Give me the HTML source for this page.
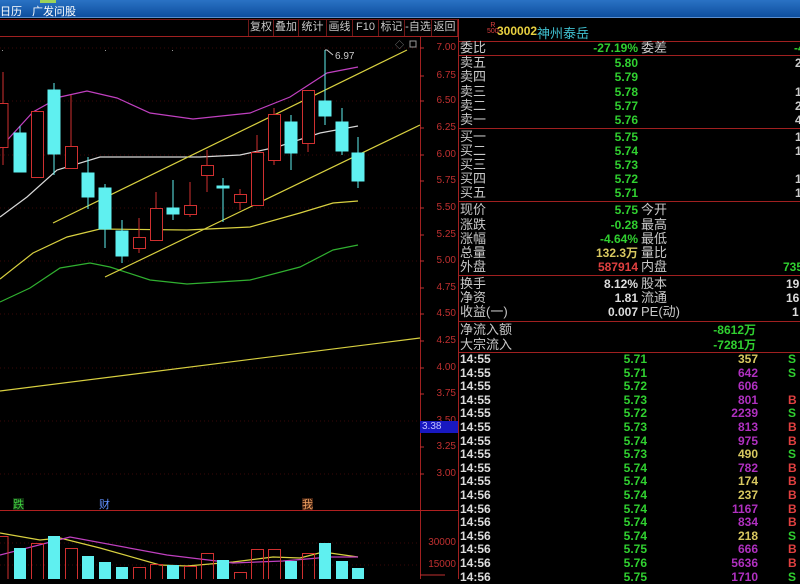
<!DOCTYPE html>
<html><head><meta charset="utf-8"><style>
*{margin:0;padding:0;box-sizing:border-box}
body{width:800px;height:579px;background:#000;position:relative;overflow:hidden;font-family:"Liberation Sans","Noto Sans CJK SC",sans-serif}
.top{position:absolute;left:0;top:0;width:800px;height:18px;background:linear-gradient(#2a72c4,#0e4f9e);border-bottom:1px solid #5a8fd0}
.top span{position:absolute;top:3px;color:#fff;font-size:11px}
.tb{position:absolute;top:19px;height:17px;font-size:11px;color:#c8c8c8;line-height:17px;text-align:center;border-left:1px solid #701818}
.t{position:absolute;font-size:13px;color:#c8c8c8;white-space:nowrap;line-height:14px}
.v{position:absolute;font-size:12px;font-weight:bold;white-space:nowrap;line-height:14px;text-align:right}
.hl{position:absolute;left:458px;width:342px;height:1px;background:#a02020}
.ax{position:absolute;left:420px;width:36px;text-align:right;font-size:10px;color:#c03030;line-height:10px}
</style></head><body>
<div class="top"><span style="left:0">日历</span><span style="left:32px">广发问股</span><div style="position:absolute;left:40px;top:0;width:16px;height:3px;background:#9cd35a"></div></div>
<div style="position:absolute;left:0;top:19px;width:458px;height:17px;background:#000"></div>
<div class="tb" style="left:248px;width:25px">复权</div>
<div class="tb" style="left:273px;width:25px">叠加</div>
<div class="tb" style="left:298px;width:28px">统计</div>
<div class="tb" style="left:326px;width:26px">画线</div>
<div class="tb" style="left:352px;width:26px">F10</div>
<div class="tb" style="left:378px;width:26px">标记</div>
<div class="tb" style="left:404px;width:27px">-自选</div>
<div class="tb" style="left:431px;width:27px;border-right:1px solid #701818">返回</div>
<div style="position:absolute;left:0;top:36px;width:458px;height:1px;background:#a02020"></div>
<div style="position:absolute;left:0;top:19px;width:458px;height:1px;background:#701818"></div>

<svg style="position:absolute;left:0;top:0" width="458" height="579">
<g stroke="#3a0808" stroke-width="1" stroke-dasharray="1,3">
<line x1="0" y1="48" x2="420" y2="48"/><line x1="0" y1="101" x2="420" y2="101"/><line x1="0" y1="155" x2="420" y2="155"/><line x1="0" y1="208" x2="420" y2="208"/><line x1="0" y1="261" x2="420" y2="261"/><line x1="0" y1="314" x2="420" y2="314"/><line x1="0" y1="368" x2="420" y2="368"/><line x1="0" y1="421" x2="420" y2="421"/><line x1="0" y1="474" x2="420" y2="474"/><line x1="0" y1="543" x2="420" y2="543"/><line x1="0" y1="565" x2="420" y2="565"/>
</g>
<line x1="420.5" y1="37" x2="420.5" y2="579" stroke="#a02020"/>
<line x1="0" y1="510.5" x2="458" y2="510.5" stroke="#b02020"/>
<g stroke="#c03030"><line x1="420" y1="48" x2="424" y2="48"/><line x1="420" y1="76" x2="424" y2="76"/><line x1="420" y1="101" x2="424" y2="101"/><line x1="420" y1="128" x2="424" y2="128"/><line x1="420" y1="155" x2="424" y2="155"/><line x1="420" y1="181" x2="424" y2="181"/><line x1="420" y1="208" x2="424" y2="208"/><line x1="420" y1="235" x2="424" y2="235"/><line x1="420" y1="261" x2="424" y2="261"/><line x1="420" y1="288" x2="424" y2="288"/><line x1="420" y1="314" x2="424" y2="314"/><line x1="420" y1="341" x2="424" y2="341"/><line x1="420" y1="368" x2="424" y2="368"/><line x1="420" y1="394" x2="424" y2="394"/><line x1="420" y1="447" x2="424" y2="447"/><line x1="420" y1="474" x2="424" y2="474"/></g>
<g fill="none" stroke-width="1.2">
<polyline stroke="#c040c0" points="0,148 33,112 60,97 87,91 117,98 150,113 193,119 250,113 290,97 327,73 358,67"/>
<polyline stroke="#d8d8d8" points="0,217 27,197 57,170 100,157 150,157 200,157 240,155 277,147 320,133 358,126"/>
<polyline stroke="#d8d040" points="0,279 33,253 67,237 100,229 187,230 250,227 300,213 333,203 358,201"/>
<polyline stroke="#30b030" points="0,302 30,288 60,268 90,263 110,267 150,280 187,284 250,280 300,267 333,250 358,245"/>
<line stroke="#d8d040" x1="53" y1="223" x2="407" y2="50"/>
<line stroke="#d8d040" x1="105" y1="277" x2="420" y2="125"/>
<line stroke="#d8d040" x1="0" y1="391" x2="420" y2="338"/>
<polyline stroke="#d8d040" points="0,533 40,540 60,538 100,548 160,565 187,566 233,562 273,557 300,558 323,552 358,557"/>
<polyline stroke="#c040c0" points="0,555 70,537 167,555 233,563 283,561 330,557 358,557"/>
</g>
<g stroke="#d03030" fill="none">
<line x1="3" y1="72" x2="3" y2="165"/><rect x="-2" y="103.5" width="10" height="44" fill="#000"/>
<line x1="37" y1="111" x2="37" y2="177"/><rect x="31.5" y="111.5" width="12" height="66" fill="#000"/>
<line x1="71" y1="95" x2="71" y2="168"/><rect x="65.5" y="146.5" width="12" height="22" fill="#000"/>
<line x1="139" y1="218" x2="139" y2="253"/><rect x="133.5" y="237.5" width="12" height="11" fill="#000"/>
<line x1="156" y1="192" x2="156" y2="240"/><rect x="150.5" y="208.5" width="12" height="32" fill="#000"/>
<line x1="190" y1="182" x2="190" y2="217"/><rect x="184.5" y="205.5" width="12" height="9" fill="#000"/>
<line x1="207" y1="150" x2="207" y2="192"/><rect x="201.5" y="165.5" width="12" height="10" fill="#000"/>
<line x1="240" y1="189" x2="240" y2="210"/><rect x="234.5" y="194.5" width="12" height="8" fill="#000"/>
<line x1="257" y1="135" x2="257" y2="206"/><rect x="251.5" y="152.5" width="12" height="53" fill="#000"/>
<line x1="274" y1="108" x2="274" y2="165"/><rect x="268.5" y="114.5" width="12" height="46" fill="#000"/>
<line x1="308" y1="90" x2="308" y2="152"/><rect x="302.5" y="90.5" width="12" height="53" fill="#000"/>
</g>
<g stroke="#5ff0f0" fill="#5ff0f0">
<line x1="20" y1="126" x2="20" y2="172"/><rect x="14" y="133" width="12" height="39"/>
<line x1="54" y1="83" x2="54" y2="175"/><rect x="48" y="90" width="12" height="64"/>
<line x1="88" y1="157" x2="88" y2="209"/><rect x="82" y="173" width="12" height="24"/>
<line x1="105" y1="184" x2="105" y2="248"/><rect x="99" y="188" width="12" height="41"/>
<line x1="122" y1="220" x2="122" y2="263"/><rect x="116" y="231" width="12" height="25"/>
<line x1="173" y1="180" x2="173" y2="220"/><rect x="167" y="208" width="12" height="6"/>
<line x1="223" y1="178" x2="223" y2="222"/><rect x="217" y="186" width="12" height="2"/>
<line x1="291" y1="115" x2="291" y2="170"/><rect x="285" y="122" width="12" height="31"/>
<line x1="325" y1="50" x2="325" y2="125"/><rect x="319" y="101" width="12" height="15"/>
<line x1="342" y1="108" x2="342" y2="155"/><rect x="336" y="122" width="12" height="29"/>
<line x1="358" y1="137" x2="358" y2="188"/><rect x="352" y="153" width="12" height="28"/>
</g>
<polyline points="325,50 327,50 333,55" fill="none" stroke="#ccc"/>
<text x="335" y="59" font-size="10" fill="#ccc" font-family="Liberation Sans">6.97</text>
<text x="395" y="48" font-size="9" fill="#888">◇</text>
<rect x="410" y="41" width="6" height="6" fill="none" stroke="#999"/>
<g fill="#999"><rect x="2" y="50" width="1" height="1"/><rect x="105" y="50" width="1" height="1"/><rect x="172" y="50" width="1" height="1"/></g>
<g stroke="#d03030" fill="none">
<rect x="-2" y="536.5" width="10" height="50"/><rect x="31.5" y="543.5" width="12" height="40"/><rect x="65.5" y="548.5" width="12" height="40"/><rect x="133.5" y="567.5" width="12" height="20"/><rect x="150.5" y="564.5" width="12" height="20"/><rect x="184.5" y="566.5" width="12" height="20"/><rect x="201.5" y="553.5" width="12" height="30"/><rect x="234.5" y="572.5" width="12" height="20"/><rect x="251.5" y="549.5" width="12" height="40"/><rect x="268.5" y="549.5" width="12" height="40"/><rect x="302.5" y="553.5" width="12" height="40"/>
</g>
<g fill="#5ff0f0">
<rect x="14" y="548" width="12" height="31"/><rect x="48" y="536" width="12" height="43"/><rect x="82" y="556" width="12" height="23"/><rect x="99" y="562" width="12" height="17"/><rect x="116" y="567" width="12" height="12"/><rect x="167" y="565" width="12" height="14"/><rect x="217" y="560" width="12" height="19"/><rect x="285" y="561" width="12" height="18"/><rect x="319" y="543" width="12" height="36"/><rect x="336" y="561" width="12" height="18"/><rect x="352" y="568" width="12" height="11"/>
</g>
<g font-size="11" font-family="Noto Sans CJK SC,sans-serif">
<rect x="13" y="498" width="11" height="12" fill="#103010"/><text x="13" y="508" fill="#40d040">跌</text>
<text x="99" y="508" fill="#6090ff">财</text>
<rect x="302" y="498" width="11" height="12" fill="#402010"/><text x="302" y="508" fill="#f0a060">我</text>
</g>
<line x1="420" y1="575" x2="445" y2="575" stroke="#c03030"/>
</svg>
<div class="ax" style="top:43px">7.00</div><div class="ax" style="top:71px">6.75</div><div class="ax" style="top:96px">6.50</div><div class="ax" style="top:123px">6.25</div><div class="ax" style="top:150px">6.00</div><div class="ax" style="top:176px">5.75</div><div class="ax" style="top:203px">5.50</div><div class="ax" style="top:230px">5.25</div><div class="ax" style="top:256px">5.00</div><div class="ax" style="top:283px">4.75</div><div class="ax" style="top:309px">4.50</div><div class="ax" style="top:336px">4.25</div><div class="ax" style="top:363px">4.00</div><div class="ax" style="top:389px">3.75</div><div class="ax" style="top:416px">3.50</div><div class="ax" style="top:442px">3.25</div><div class="ax" style="top:469px">3.00</div>
<div class="ax" style="top:538px">30000</div><div class="ax" style="top:560px">15000</div>
<div style="position:absolute;left:420px;top:421px;width:38px;height:12px;background:#1818c0;color:#c0c0ff;font-size:10px;line-height:12px;padding-left:2px">3.38</div>

<div style="position:absolute;left:458px;top:19px;width:1px;height:560px;background:#a02020"></div>
<div class="hl" style="top:41px"></div><div class="hl" style="top:55px"></div><div class="hl" style="top:128px"></div><div class="hl" style="top:201px"></div><div class="hl" style="top:275px"></div><div class="hl" style="top:321px"></div><div class="hl" style="top:352px"></div>
<div style="position:absolute;left:487px;top:23px;font-size:7px;line-height:6px;color:#e04040;text-align:center">R<br>500</div>
<div style="position:absolute;left:497px;top:24px;font-size:12px;font-weight:bold;color:#e8d040">300002</div>
<div style="position:absolute;left:537px;top:23px;font-size:13px;color:#40c0d0">神州泰岳</div>

<div class="t" style="left:460px;top:41px">委比</div><div class="v" style="right:162px;top:41px;color:#30d030">-27.19%</div><div class="t" style="left:641px;top:41px">委差</div><div class="v" style="left:794px;top:41px;color:#30d030">-4</div>
<div class="t" style="left:460px;top:56px">卖五</div><div class="v" style="right:162px;top:56px;color:#30d030">5.80</div><div class="v" style="left:795px;top:56px;color:#ccc">2</div>
<div class="t" style="left:460px;top:70px">卖四</div><div class="v" style="right:162px;top:70px;color:#30d030">5.79</div>
<div class="t" style="left:460px;top:85px">卖三</div><div class="v" style="right:162px;top:85px;color:#30d030">5.78</div><div class="v" style="left:795px;top:85px;color:#ccc">1</div>
<div class="t" style="left:460px;top:99px">卖二</div><div class="v" style="right:162px;top:99px;color:#30d030">5.77</div><div class="v" style="left:795px;top:99px;color:#ccc">2</div>
<div class="t" style="left:460px;top:113px">卖一</div><div class="v" style="right:162px;top:113px;color:#30d030">5.76</div><div class="v" style="left:795px;top:113px;color:#ccc">4</div>
<div class="t" style="left:460px;top:130px">买一</div><div class="v" style="right:162px;top:130px;color:#30d030">5.75</div><div class="v" style="left:795px;top:130px;color:#ccc">1</div>
<div class="t" style="left:460px;top:144px">买二</div><div class="v" style="right:162px;top:144px;color:#30d030">5.74</div><div class="v" style="left:795px;top:144px;color:#ccc">1</div>
<div class="t" style="left:460px;top:158px">买三</div><div class="v" style="right:162px;top:158px;color:#30d030">5.73</div>
<div class="t" style="left:460px;top:172px">买四</div><div class="v" style="right:162px;top:172px;color:#30d030">5.72</div><div class="v" style="left:795px;top:172px;color:#ccc">1</div>
<div class="t" style="left:460px;top:186px">买五</div><div class="v" style="right:162px;top:186px;color:#30d030">5.71</div><div class="v" style="left:795px;top:186px;color:#ccc">1</div>
<div class="t" style="left:460px;top:203px">现价</div><div class="v" style="right:162px;top:203px;color:#30d030">5.75</div><div class="t" style="left:641px;top:203px">今开</div>
<div class="t" style="left:460px;top:218px">涨跌</div><div class="v" style="right:162px;top:218px;color:#30d030">-0.28</div><div class="t" style="left:641px;top:218px">最高</div>
<div class="t" style="left:460px;top:232px">涨幅</div><div class="v" style="right:162px;top:232px;color:#30d030">-4.64%</div><div class="t" style="left:641px;top:232px">最低</div>
<div class="t" style="left:460px;top:246px">总量</div><div class="v" style="right:162px;top:246px;color:#d8c860">132.3万</div><div class="t" style="left:641px;top:246px">量比</div>
<div class="t" style="left:460px;top:260px">外盘</div><div class="v" style="right:162px;top:260px;color:#e04040">587914</div><div class="t" style="left:641px;top:260px">内盘</div><div class="v" style="left:783px;top:260px;color:#30d030">735</div>
<div class="t" style="left:460px;top:277px">换手</div><div class="v" style="right:162px;top:277px;color:#ddd">8.12%</div><div class="t" style="left:641px;top:277px">股本</div><div class="v" style="left:786px;top:277px;color:#ddd">19</div>
<div class="t" style="left:460px;top:291px">净资</div><div class="v" style="right:162px;top:291px;color:#ddd">1.81</div><div class="t" style="left:641px;top:291px">流通</div><div class="v" style="left:786px;top:291px;color:#ddd">16</div>
<div class="t" style="left:460px;top:305px">收益(一)</div><div class="v" style="right:162px;top:305px;color:#ddd">0.007</div><div class="t" style="left:641px;top:305px">PE(动)</div><div class="v" style="left:792px;top:305px;color:#ddd">1</div>
<div class="t" style="left:460px;top:323px">净流入额</div><div class="v" style="right:44px;top:323px;color:#30d030">-8612万</div>
<div class="t" style="left:460px;top:338px">大宗流入</div><div class="v" style="right:44px;top:338px;color:#30d030">-7281万</div>

<div style="position:absolute;left:458px;top:353px;width:342px;font-size:12px;font-weight:bold;line-height:13.6px">
<div style="position:relative;height:13.6px"><span style="position:absolute;left:2px;color:#ddd">14:55</span><span style="position:absolute;right:153px;color:#30d030">5.71</span><span style="position:absolute;right:42px;color:#d8c860">357</span><span style="position:absolute;left:330px;color:#30d030">S</span></div>
<div style="position:relative;height:13.6px"><span style="position:absolute;left:2px;color:#ddd">14:55</span><span style="position:absolute;right:153px;color:#30d030">5.71</span><span style="position:absolute;right:42px;color:#b030c0">642</span><span style="position:absolute;left:330px;color:#30d030">S</span></div>
<div style="position:relative;height:13.6px"><span style="position:absolute;left:2px;color:#ddd">14:55</span><span style="position:absolute;right:153px;color:#30d030">5.72</span><span style="position:absolute;right:42px;color:#b030c0">606</span></div>
<div style="position:relative;height:13.6px"><span style="position:absolute;left:2px;color:#ddd">14:55</span><span style="position:absolute;right:153px;color:#30d030">5.73</span><span style="position:absolute;right:42px;color:#b030c0">801</span><span style="position:absolute;left:330px;color:#e04040">B</span></div>
<div style="position:relative;height:13.6px"><span style="position:absolute;left:2px;color:#ddd">14:55</span><span style="position:absolute;right:153px;color:#30d030">5.72</span><span style="position:absolute;right:42px;color:#b030c0">2239</span><span style="position:absolute;left:330px;color:#30d030">S</span></div>
<div style="position:relative;height:13.6px"><span style="position:absolute;left:2px;color:#ddd">14:55</span><span style="position:absolute;right:153px;color:#30d030">5.73</span><span style="position:absolute;right:42px;color:#b030c0">813</span><span style="position:absolute;left:330px;color:#e04040">B</span></div>
<div style="position:relative;height:13.6px"><span style="position:absolute;left:2px;color:#ddd">14:55</span><span style="position:absolute;right:153px;color:#30d030">5.74</span><span style="position:absolute;right:42px;color:#b030c0">975</span><span style="position:absolute;left:330px;color:#e04040">B</span></div>
<div style="position:relative;height:13.6px"><span style="position:absolute;left:2px;color:#ddd">14:55</span><span style="position:absolute;right:153px;color:#30d030">5.73</span><span style="position:absolute;right:42px;color:#d8c860">490</span><span style="position:absolute;left:330px;color:#30d030">S</span></div>
<div style="position:relative;height:13.6px"><span style="position:absolute;left:2px;color:#ddd">14:55</span><span style="position:absolute;right:153px;color:#30d030">5.74</span><span style="position:absolute;right:42px;color:#b030c0">782</span><span style="position:absolute;left:330px;color:#e04040">B</span></div>
<div style="position:relative;height:13.6px"><span style="position:absolute;left:2px;color:#ddd">14:55</span><span style="position:absolute;right:153px;color:#30d030">5.74</span><span style="position:absolute;right:42px;color:#d8c860">174</span><span style="position:absolute;left:330px;color:#e04040">B</span></div>
<div style="position:relative;height:13.6px"><span style="position:absolute;left:2px;color:#ddd">14:56</span><span style="position:absolute;right:153px;color:#30d030">5.74</span><span style="position:absolute;right:42px;color:#d8c860">237</span><span style="position:absolute;left:330px;color:#e04040">B</span></div>
<div style="position:relative;height:13.6px"><span style="position:absolute;left:2px;color:#ddd">14:56</span><span style="position:absolute;right:153px;color:#30d030">5.74</span><span style="position:absolute;right:42px;color:#b030c0">1167</span><span style="position:absolute;left:330px;color:#e04040">B</span></div>
<div style="position:relative;height:13.6px"><span style="position:absolute;left:2px;color:#ddd">14:56</span><span style="position:absolute;right:153px;color:#30d030">5.74</span><span style="position:absolute;right:42px;color:#b030c0">834</span><span style="position:absolute;left:330px;color:#e04040">B</span></div>
<div style="position:relative;height:13.6px"><span style="position:absolute;left:2px;color:#ddd">14:56</span><span style="position:absolute;right:153px;color:#30d030">5.74</span><span style="position:absolute;right:42px;color:#d8c860">218</span><span style="position:absolute;left:330px;color:#30d030">S</span></div>
<div style="position:relative;height:13.6px"><span style="position:absolute;left:2px;color:#ddd">14:56</span><span style="position:absolute;right:153px;color:#30d030">5.75</span><span style="position:absolute;right:42px;color:#b030c0">666</span><span style="position:absolute;left:330px;color:#e04040">B</span></div>
<div style="position:relative;height:13.6px"><span style="position:absolute;left:2px;color:#ddd">14:56</span><span style="position:absolute;right:153px;color:#30d030">5.76</span><span style="position:absolute;right:42px;color:#b030c0">5636</span><span style="position:absolute;left:330px;color:#e04040">B</span></div>
<div style="position:relative;height:13.6px"><span style="position:absolute;left:2px;color:#ddd">14:56</span><span style="position:absolute;right:153px;color:#30d030">5.75</span><span style="position:absolute;right:42px;color:#b030c0">1710</span><span style="position:absolute;left:330px;color:#30d030">S</span></div>
</div>
</body></html>
